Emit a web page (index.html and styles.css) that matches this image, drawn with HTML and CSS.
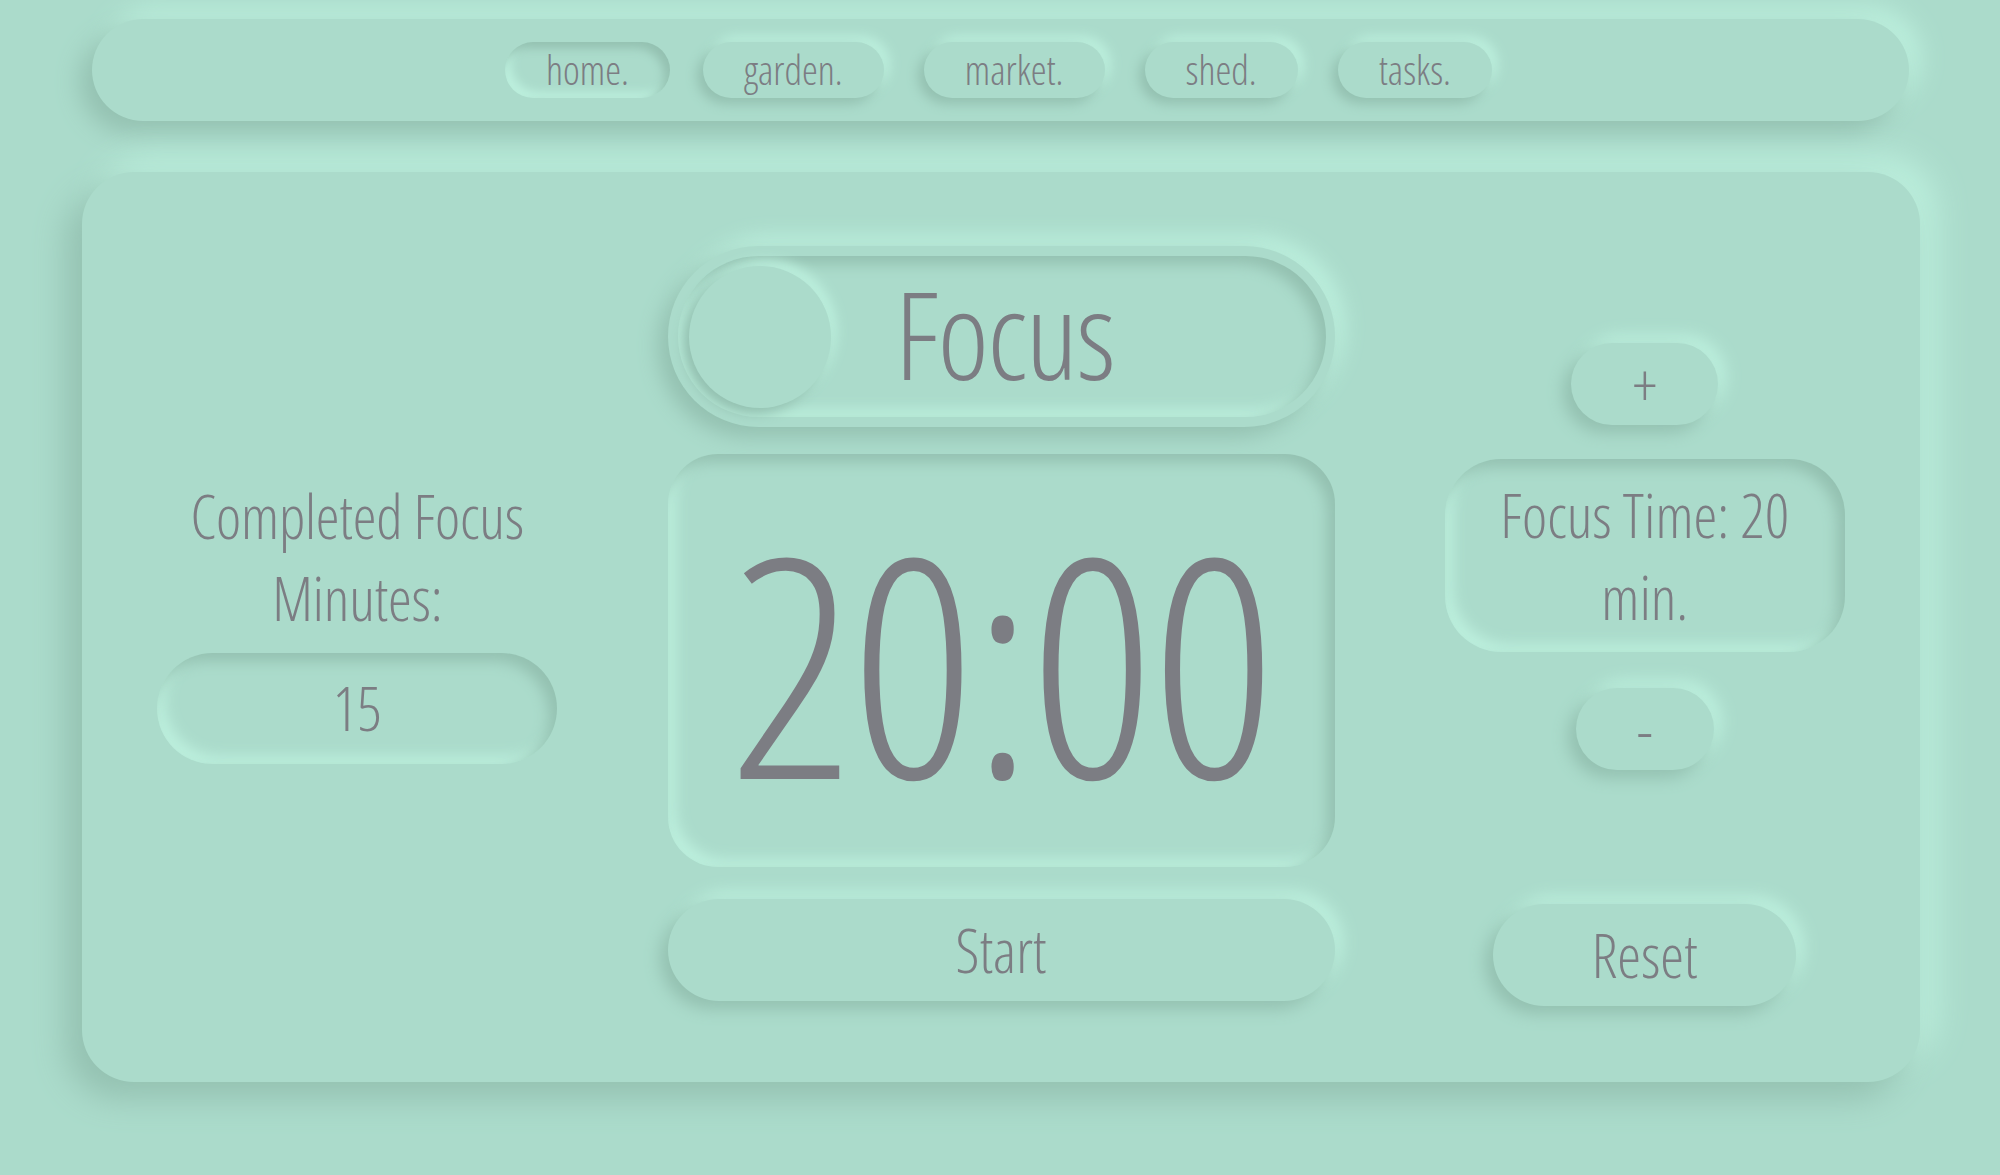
FILE: index.html
```html
<!DOCTYPE html>
<html lang="en">
<head>
<meta charset="utf-8">
<title>Focus Timer</title>
<link rel="stylesheet" href="styles.css">
</head>
<body>
  <nav class="nav">
    <a class="nav-item is-active">home.</a>
    <a class="nav-item">garden.</a>
    <a class="nav-item">market.</a>
    <a class="nav-item">shed.</a>
    <a class="nav-item">tasks.</a>
  </nav>

  <main class="card">
    <section class="col col-left">
      <p class="label">Completed Focus Minutes:</p>
      <div class="well well-count">15</div>
    </section>

    <section class="col col-center">
      <div class="toggle">
        <div class="track">
          <span class="knob"></span>
          <span class="mode">Focus</span>
        </div>
      </div>
      <div class="well timer">20:00</div>
      <button class="btn btn-start">Start</button>
    </section>

    <section class="col col-right">
      <button class="btn btn-step btn-plus">+</button>
      <div class="well well-time">Focus Time: 20 min.</div>
      <button class="btn btn-step btn-minus">-</button>
      <button class="btn btn-reset">Reset</button>
    </section>
  </main>
</body>
</html>
```

FILE: styles.css
```css
:root {
  --bg: #abdbcb;
  --light: #bcefdd;
  --dark: #94c1b1;
  --ink: #7c7d83;
}

* { box-sizing: border-box; }

html, body {
  margin: 0;
  padding: 0;
  background: var(--bg);
}

body {
  font-family: "Open Sans", "Liberation Sans", sans-serif;
  font-weight: 300;
  font-stretch: 75%;
  color: var(--ink);
  min-height: 1175px;
  overflow: hidden;
}

button {
  font: inherit;
  color: inherit;
  border: 0;
  background: var(--bg);
  cursor: pointer;
}

/* ---------- nav ---------- */
.nav {
  margin: 19px 91px 0 92px;
  height: 102px;
  border-radius: 51px;
  background: var(--bg);
  box-shadow: -12px 12px 24px var(--dark), 12px -12px 24px var(--light);
  display: flex;
  justify-content: center;
  align-items: center;
  gap: 40px;
  padding-right: 4px;
}

.nav-item {
  font-size: 40px;
  line-height: 56px;
  height: 56px;
  padding: 0 41px;
  border-radius: 28px;
  background: var(--bg);
  box-shadow: -6px 6px 12px var(--dark), 6px -6px 12px var(--light);
}

.nav-item.is-active {
  margin-right: -7px;
  box-shadow: inset -6px 6px 10px var(--dark), inset 6px -6px 10px var(--light);
}

/* ---------- card ---------- */
.card {
  margin: 51px 80px 0 82px;
  height: 910px;
  border-radius: 52px;
  background: var(--bg);
  box-shadow: -16px 16px 32px var(--dark), 16px -16px 32px var(--light);
  padding: 74px 0 81px;
  display: grid;
  grid-template-columns: 1fr 667px 1fr;
  column-gap: 35px;
}

.col {
  display: flex;
  flex-direction: column;
  align-items: center;
  font-size: 60px;
}

.col-left {
  justify-content: center;
  padding-bottom: 14px;
}

.label {
  margin: 0 0 14px;
  width: 400px;
  text-align: center;
  letter-spacing: -0.003em;
}

.well {
  background: var(--bg);
  box-shadow: inset -8px 8px 14px var(--dark), inset 8px -8px 14px var(--light);
  text-align: center;
}

.well-count {
  width: 400px;
  height: 111px;
  line-height: 111px;
  border-radius: 56px;
}

/* center column */
.toggle {
  width: 667px;
  height: 181px;
  border-radius: 91px;
  padding: 10px 9px 10px 10px;
  background: var(--bg);
  box-shadow: -10px 10px 20px var(--dark), 10px -10px 20px var(--light);
}

.track {
  height: 100%;
  border-radius: 81px;
  display: grid;
  align-items: center;
  box-shadow: inset -8px 8px 14px var(--dark), inset 8px -8px 14px var(--light);
}

.knob, .mode {
  grid-area: 1 / 1;
}

.knob {
  justify-self: start;
  margin-left: 11px;
  width: 142px;
  height: 142px;
  border-radius: 50%;
  background: var(--bg);
  box-shadow: -6px 6px 12px var(--dark), 6px -6px 12px var(--light);
}

.mode {
  justify-self: center;
  font-size: 122px;
  line-height: 1;
  letter-spacing: -0.012em;
  margin-left: 6px;
  margin-top: -8px;
}

.timer {
  margin-top: 27px;
  width: 667px;
  height: 413px;
  border-radius: 50px;
  font-size: 306px;
  line-height: 413px;
  letter-spacing: -0.01em;
  display: flex;
  justify-content: center;
  align-items: center;
}

.btn {
  height: 102px;
  border-radius: 51px;
  box-shadow: -8px 8px 16px var(--dark), 8px -8px 16px var(--light);
  line-height: 82px;
  padding: 0;
}

.btn-start {
  margin-top: 32px;
  width: 667px;
}

/* right column */
.btn-step {
  height: 82px;
  border-radius: 41px;
  padding: 0 61px;
}

.btn-plus { margin-top: 97px; }

.well-time {
  margin-top: 34px;
  width: 400px;
  height: 193px;
  border-radius: 56px;
  padding: 15px 50px;
  line-height: 82px;
}

.btn-minus { margin-top: 36px; }

.btn-reset {
  margin-top: 134px;
  width: 303px;
}
```
